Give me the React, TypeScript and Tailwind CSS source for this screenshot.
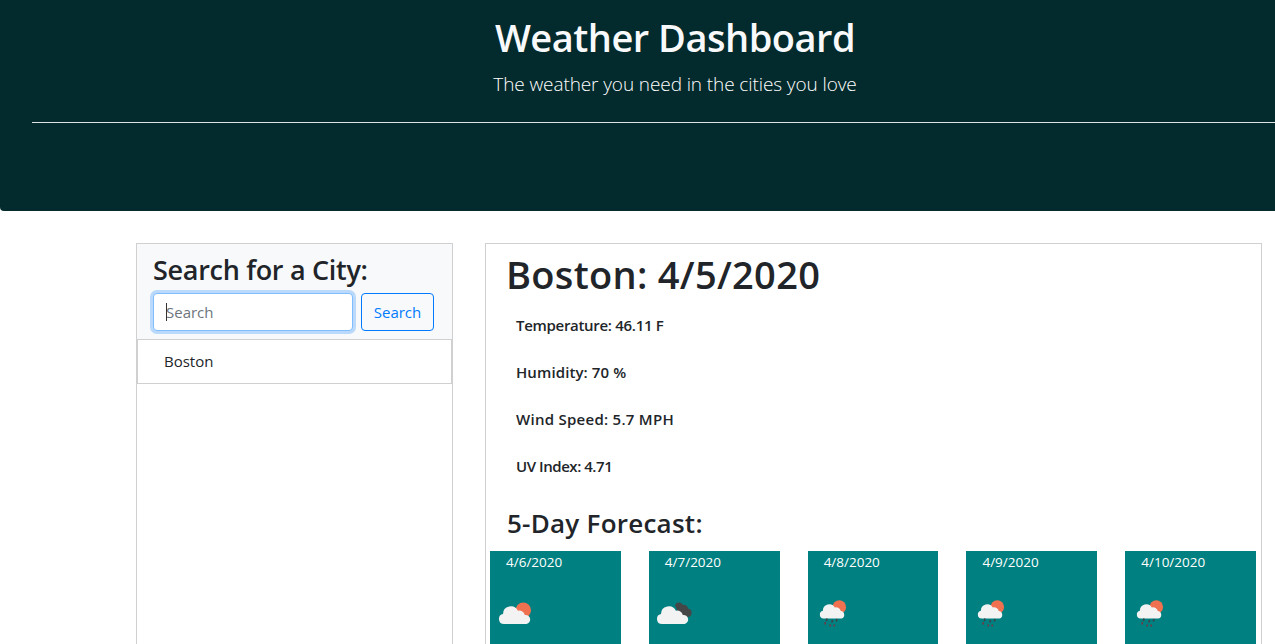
const forecast = [
  { date: "4/6/2020", icon: "sun" },
  { date: "4/7/2020", icon: "dark" },
  { date: "4/8/2020", icon: "rain" },
  { date: "4/9/2020", icon: "rain" },
  { date: "4/10/2020", icon: "rain" },
]

function WeatherIcon({ type }: { type: string }) {
  if (type === "rain") {
    return (
      <svg width="50" height="50" viewBox="0 0 50 50" className="mt-[18px] block">
        <circle cx="31.300" cy="17" r="6.800" fill="#ef7150" />
        <path
          d="M15.500 28.500a3.900 3.900 0 0 1-.6-7.700 6.400 6.400 0 0 1 11.900-3.400 4.900 4.900 0 0 1 6 3.700 3.800 3.800 0 0 1 .8 7.400z"
          fill="#f3f3f3"
        />
        <path d="M19 28.500l-.6 2.500M24.500 30l-.7 2.500M29 29l-.6 2.500" stroke="#3f4046" strokeWidth="1.500" />
        <path d="M17.500 32l-.6 2.500M22.500 34.500l-.5 2M26.500 34.500l-.5 2" stroke="#703a44" strokeWidth="1.500" />
      </svg>
    )
  }
  const dark = type === "dark"
  return (
    <svg width="50" height="50" viewBox="0 0 50 50" className={dark ? "mt-[18px] -ml-px block" : "mt-[18px] block"}>
      {dark ? (
        <path
          d="M27 15a4.500 4.500 0 0 1 8 0 4 4 0 0 1 5 3.500 4.300 4.300 0 0 1 0 8.500l-8 .5z"
          fill="#444648"
        />
      ) : (
        <circle cx="33.300" cy="20.300" r="7.700" fill="#ef7150" />
      )}
      <path
        d="M14 34a5 5 0 0 1-1-9.900 7.800 7.800 0 0 1 14.900-3.300 5.400 5.400 0 0 1 6.900 4.300 4.500 4.500 0 0 1 1.700 8.900z"
        fill="#f3f3f3"
      />
    </svg>
  )
}

export default function App() {
  return (
    <div
      className="h-[644px] w-[1275px] overflow-hidden bg-white text-[#212529]"
      style={{ fontFamily: '"Open Sans", sans-serif' }}
    >
      <header className="h-[211px] w-[1350px] rounded-bl-[4px] bg-[#032a2c] px-8 pt-[13px] text-center text-[#f8f9fa]">
        <h1 className="text-[38px] leading-[48px] font-semibold tracking-[-0.5px]">Weather Dashboard</h1>
        <p className="mt-[11px] text-[19px] leading-6 font-light tracking-[-0.1px] text-white">
          The weather you need in the cities you love
        </p>
        <hr className="mt-[26px] border-t border-[#dfe3e3]" />
      </header>

      <main className="mt-8 ml-[136px] flex gap-8">
        <aside className="h-[420px] w-[317px] shrink-0 border border-[#d0d0d0]">
          <div className="h-[95px] bg-[#f8f9fa] pt-2 pl-4">
            <h2 className="text-[27px] leading-[36px] font-semibold tracking-[-0.3px]">Search for a City:</h2>
            <div className="mt-[5px] flex gap-2">
              <div className="relative">
                <input
                  placeholder="Search"
                  className="h-[38px] w-[200px] rounded-[4px] border border-[#80bdff] bg-white px-3 text-[15px] shadow-[0_0_0_3px_rgba(0,123,255,0.25)] outline-none placeholder:text-[#6c757d]"
                />
                <span className="absolute top-[10px] left-[13px] h-[18px] w-px bg-[#333]" />
              </div>
              <button className="h-[38px] w-[73px] rounded-[4px] border border-[#007bff] text-[15px] text-[#007bff]">
                Search
              </button>
            </div>
          </div>
          <div className="h-[45px] border border-t border-[#d0d0d0] pl-[26px] text-[15px] leading-[43px]">Boston</div>
        </aside>

        <section className="h-[420px] w-[777px] shrink-0 border border-[#d0d0d0]">
          <h2 className="mt-[6px] pl-5 text-[38px] leading-[48px] font-semibold tracking-[0.3px]">Boston: 4/5/2020</h2>
          <div className="mt-1 pl-[30px] text-[15px] leading-[47px] font-semibold">
            <p className="tracking-[-0.3px]">Temperature: 46.11 F</p>
            <p className="tracking-[0.1px]">Humidity: 70 %</p>
            <p className="tracking-[0.27px]">Wind Speed: 5.7 MPH</p>
            <p className="tracking-[-0.45px]">UV Index: 4.71</p>
          </div>
          <h3 className="mt-4 pl-[21px] text-[26px] leading-[34px] font-semibold tracking-[0.25px]">
            5-Day Forecast:
          </h3>
          <div className="mt-[11px] flex justify-between pr-[5px] pl-1">
            {forecast.map((day) => (
              <div key={day.date} className="h-[120px] w-[130.750px] bg-[#008080] text-white">
                <p className="pt-px pl-4 text-[13.500px] leading-[20px]">{day.date}</p>
                <WeatherIcon type={day.icon} />
              </div>
            ))}
          </div>
        </section>
      </main>
    </div>
  )
}
